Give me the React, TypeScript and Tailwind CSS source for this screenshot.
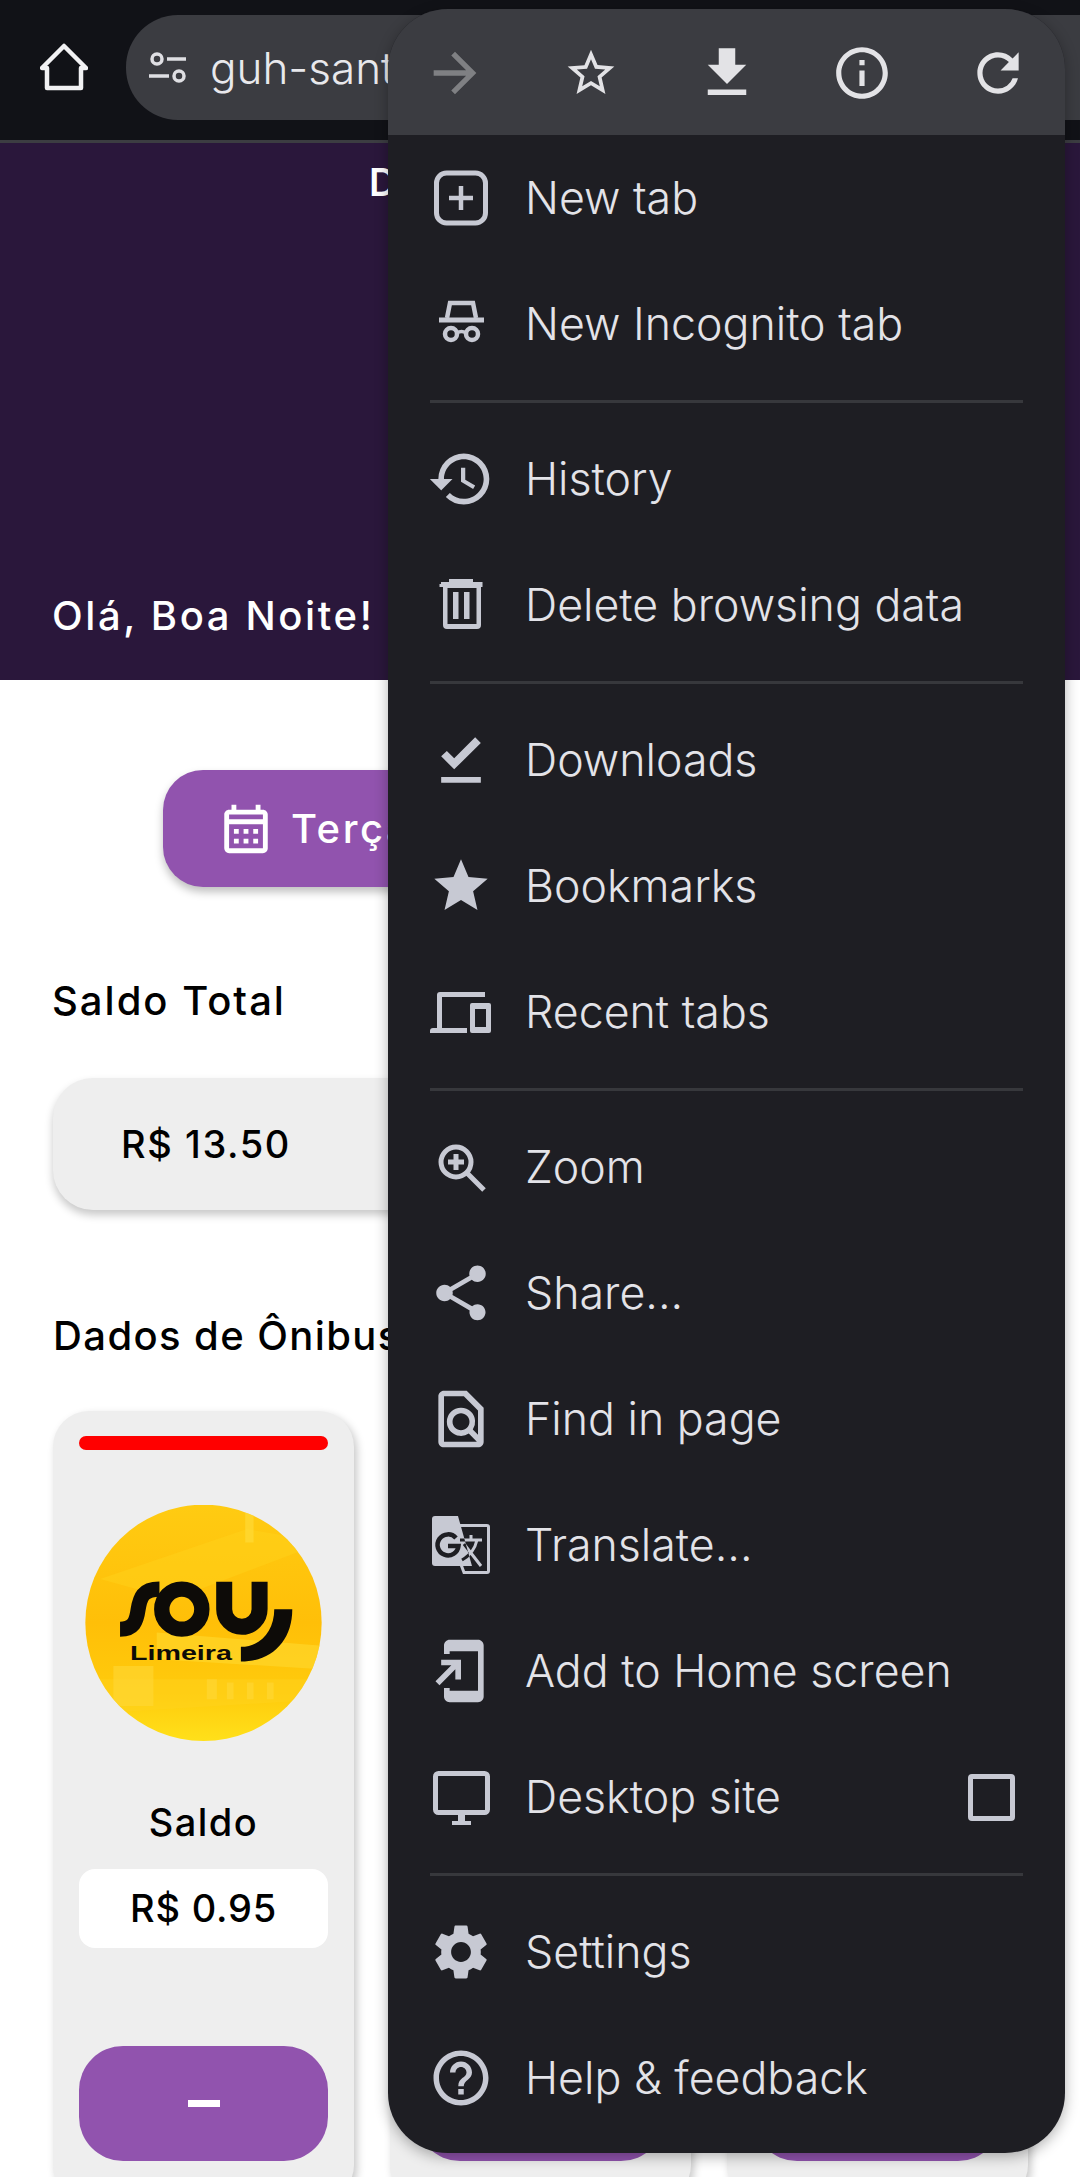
import React from 'react';
import {
  MdArrowForward,
  MdFileDownload,
  MdFileDownloadDone,
  MdHelpOutline,
  MdHistory,
  MdInfoOutline,
  MdOutlineAddToHomeScreen,
  MdOutlineCalendarMonth,
  MdOutlineFindInPage,
  MdRefresh,
  MdSettings,
  MdShare,
  MdStar,
  MdStarBorder,
} from 'react-icons/md';

const pageFont = { fontFamily: 'Inter, sans-serif' };

const NewTabIcon = () => (
  <svg width="68" height="68" viewBox="0 0 68 68" fill="none" stroke="#c7c9d3">
    <rect x="9.5" y="9" width="49" height="50" rx="10" strokeWidth="5" />
    <path d="M34 22v24M22 34h24" strokeWidth="4.5" />
  </svg>
);

const IncognitoIcon = () => (
  <svg width="68" height="68" viewBox="0 0 68 68" fill="none" stroke="#c7c9d3" strokeWidth="4.5">
    <path d="M20 28 23 13h23l3 15" />
    <path d="M12 30h45" strokeWidth="5" />
    <circle cx="24" cy="44" r="6" />
    <circle cx="45" cy="44" r="6" />
    <path d="M30 43c3-2 6-2 9 0" strokeWidth="3.5" />
  </svg>
);

const TrashIcon = () => (
  <svg width="68" height="68" viewBox="0 0 68 68" fill="#c7c9d3">
    <path d="M22 8h24v3h9.500v5h-43v-3H14v-2h8Z" />
    <path d="M16 15h38v39q0 4-4 4H20q-4 0-4-4Zm4.500 2v36h29V17Z" fillRule="evenodd" />
    <path d="M26 21h5.500v27H26ZM37 21h5.500v27H37Z" />
  </svg>
);

const ZoomIcon = () => (
  <svg width="68" height="68" viewBox="0 0 68 68" fill="none" stroke="#c7c9d3" strokeWidth="5">
    <circle cx="29" cy="29" r="15" />
    <path d="M40 40 57 57M29 21v16M21 29h16" />
  </svg>
);

const RecentTabsIcon = () => (
  <svg width="68" height="68" viewBox="0 0 68 68" fill="#c7c9d3">
    <path d="M6 50h4V17q0-3 3-3h45v5H15v31h25v5H3v-2q0-3 3-3Z" />
    <path fillRule="evenodd" d="M45 25h17q2 0 2 2v26q0 2-2 2H45q-2 0-2-2V27q0-2 2-2Zm3 6v18h11V31Z" />
  </svg>
);

const wenStrokes = 'M33 29h22M44 24v5M50 29c-2 9-8 16-15 20M37 33l17 22';

const TranslateIcon = () => (
  <svg width="68" height="68" viewBox="0 0 68 68" fill="none">
    <defs>
      <clipPath id="translateFront">
        <path d="M8 5h23l14 50H8q-3 0-3-3V8q0-3 3-3Z" />
      </clipPath>
    </defs>
    <path d="M33 14.500h27q1.500 0 1.500 1.500v44q0 1.500-1.500 1.500H37l-3-8" stroke="#c7c9d3" strokeWidth="3" />
    <path d={wenStrokes} stroke="#c7c9d3" strokeWidth="3" />
    <path d="M8 5h23l14 50H8q-3 0-3-3V8q0-3 3-3Z" fill="#c7c9d3" />
    <path d="M29 27a10.500 10.500 0 1 0 2.500 8H21" stroke="#1e1e23" strokeWidth="4.500" />
    <g clipPath="url(#translateFront)">
      <path d={wenStrokes} stroke="#1e1e23" strokeWidth="3" />
    </g>
  </svg>
);

const DesktopIcon = () => (
  <svg width="68" height="68" viewBox="0 0 68 68" fill="#c7c9d3">
    <rect x="8.500" y="10.500" width="52" height="39" rx="3" fill="none" stroke="#c7c9d3" strokeWidth="5" />
    <path d="M31 50h7v8h6v4H25v-4h6Z" />
  </svg>
);

const HomeIcon = () => (
  <svg width="48" height="48" viewBox="0 0 48 48" fill="none" stroke="#f1f1f3" strokeWidth="4.500" strokeLinejoin="round">
    <path d="M24 3 2 25h5v20h34V25h5Z" />
  </svg>
);

const TuneIcon = () => (
  <svg width="40" height="32" viewBox="0 0 40 32" fill="none" stroke="#dfdfe3" strokeWidth="3.500">
    <circle cx="9" cy="7" r="5" />
    <path d="M19 7h19M1 24h20" />
    <circle cx="31" cy="24" r="5" />
  </svg>
);

const SouLogo = () => (
  <svg width="237" height="236" viewBox="255 378 710 707">
    <defs>
      <linearGradient id="sou" x1="0" y1="0" x2="0" y2="1">
        <stop offset="0" stopColor="#ffcb12" />
        <stop offset="0.5" stopColor="#ffbf08" />
        <stop offset="0.8" stopColor="#ffcb0c" />
        <stop offset="1" stopColor="#ffe01a" />
      </linearGradient>
      <clipPath id="souClip">
        <circle cx="610" cy="731" r="354" />
      </clipPath>
    </defs>
    <circle cx="610" cy="731" r="354" fill="url(#sou)" />
    <g clipPath="url(#souClip)">
      <path d="M300 600 740 450l230 40-450 170Z" fill="#ffd21a" opacity="0.5" />
      <path d="M470 760 970 800v70l-500-30Z" fill="#ffd52a" opacity="0.7" />
      <path d="M300 900h680v60l-660 40Z" fill="#ffd21e" opacity="0.45" />
      <path d="M735 400h25v90h-25Z" fill="#ffdc3c" opacity="0.6" />
      <path d="M340 860h120v120H340ZM620 900h30v60h-30ZM680 910h20v50h-20ZM740 910h20v50h-20ZM800 910h20v50h-20Z" fill="#ffd93a" opacity="0.55" />
    </g>
    <g fill="none" stroke="#0d0b08">
      <path d="M478 630c-50 0-58 25-64 62-5 36-14 58-54 58" strokeWidth="45" />
      <circle cx="545" cy="690" r="60" strokeWidth="46" />
      <path d="M672 608v82a53 53 0 0 0 106 0v-82" strokeWidth="48" />
    </g>
    <path d="M822 690h54c0 95-62 157-154 157v-44c60 0 100-50 100-113Z" fill="#0d0b08" />
    <text x="390" y="843" fontFamily="'Liberation Sans', sans-serif" fontWeight="700" fontSize="58" textLength="305" lengthAdjust="spacingAndGlyphs" fill="#0d0b08">
      Limeira
    </text>
  </svg>
);

const menuSections = [
  [
    { label: 'New tab', icon: <NewTabIcon /> },
    { label: 'New Incognito tab', icon: <IncognitoIcon /> },
  ],
  [
    { label: 'History', icon: <MdHistory size={68} /> },
    { label: 'Delete browsing data', icon: <TrashIcon /> },
  ],
  [
    { label: 'Downloads', icon: <MdFileDownloadDone size={68} /> },
    { label: 'Bookmarks', icon: <MdStar size={64} /> },
    { label: 'Recent tabs', icon: <RecentTabsIcon /> },
  ],
  [
    { label: 'Zoom', icon: <ZoomIcon /> },
    { label: 'Share...', icon: <MdShare size={66} /> },
    { label: 'Find in page', icon: <MdOutlineFindInPage size={68} /> },
    { label: 'Translate...', icon: <TranslateIcon /> },
    { label: 'Add to Home screen', icon: <MdOutlineAddToHomeScreen size={68} /> },
    { label: 'Desktop site', icon: <DesktopIcon />, checkbox: true },
  ],
  [
    { label: 'Settings', icon: <MdSettings size={66} /> },
    { label: 'Help & feedback', icon: <MdHelpOutline size={66} /> },
  ],
];

const BusCard = ({ first }: { first?: boolean }) => (
  <div className="flex h-[790px] w-[301px] shrink-0 flex-col rounded-[36px] bg-[#eeeeee] px-[26px] pt-[25px] shadow-[3px_4px_8px_rgba(0,0,0,0.22)]">
    <div className="h-[14px] rounded-full bg-[#ff0000]" />
    <div className="mt-[55px] flex h-[236px] justify-center">{first && <SouLogo />}</div>
    <p className="mt-[58px] text-center text-[38px] leading-[46px] font-medium tracking-[1.5px] text-black">Saldo</p>
    <div className="mt-[24px] flex h-[79px] items-center justify-center rounded-[16px] bg-white text-[38px] font-medium tracking-[0.8px] text-black">
      R$ 0.95
    </div>
    <div className="mt-[98px] flex h-[115px] items-center justify-center rounded-[44px] bg-[#9153ae]">
      <div className="h-[7px] w-[32px] bg-white" />
    </div>
  </div>
);

const ChromeMenu = () => (
  <div className="absolute left-[388px] top-[9px] w-[677px] overflow-hidden rounded-[60px] bg-[#1e1e23] pb-[12px] shadow-[0_4px_14px_rgba(0,0,0,0.3)]">
    <div className="flex h-[126px] items-start bg-[#3b3c41] px-[31px] pt-[31px] text-[#e3e3e6]">
      <div className="flex w-full items-center justify-between">
        <div className="flex w-[72px] justify-center"><MdArrowForward size={64} color="#7f8083" /></div>
        <div className="flex w-[72px] justify-center"><MdStarBorder size={56} /></div>
        <div className="flex w-[72px] justify-center"><MdFileDownload size={66} /></div>
        <div className="flex w-[72px] justify-center"><MdInfoOutline size={62} /></div>
        <div className="flex w-[72px] justify-center"><MdRefresh size={62} /></div>
      </div>
    </div>
    {menuSections.map((rows, i) => (
      <div key={i}>
        {i > 0 && <div className="mx-[42px] my-[13px] h-[3px] bg-[#37383c]" />}
        {rows.map((row) => (
          <div key={row.label} className="flex h-[126px] items-center pl-[39px] pr-[50px] text-[#c7c9d3]">
            <div className="flex w-[68px] justify-center">{row.icon}</div>
            <span className="ml-[30px] flex-1 pt-[2px] text-[44.7px] font-light text-[#e3e3e8]">{row.label}</span>
            {row.checkbox && <div className="h-[47px] w-[47px] rounded-[4px] border-[5px] border-[#c7c9d3]" />}
          </div>
        ))}
      </div>
    ))}
  </div>
);

export default function App() {
  return (
    <div className="relative h-[2177px] w-[1080px] overflow-hidden bg-white" style={pageFont}>
      <header className="flex h-[143px] items-start border-b-[3px] border-[#3c3d42] bg-[#111217] pl-[40px] pt-[15px]">
        <div className="mt-[28px]"><HomeIcon /></div>
        <div className="ml-[38px] flex h-[105px] flex-1 items-center rounded-l-[52px] bg-[#3b3c41] pl-[22px]">
          <TuneIcon />
          <span className="ml-[22px] text-[44px] font-light text-[#e8e8ec]">guh-sant</span>
        </div>
      </header>

      <section className="flex h-[537px] flex-col justify-between bg-[#2a173b] pb-[41px] pl-[52px] pt-[16px] text-white">
        <p className="pl-[317px] text-[38px] leading-[46px] font-semibold">D</p>
        <p className="text-[40px] leading-[46px] font-medium tracking-[2.6px]">Olá, Boa Noite!</p>
      </section>

      <main className="px-[53px]">
        <div className="mt-[90px] ml-[110px] flex h-[117px] w-[700px] items-center rounded-[40px] bg-[#9153ae] pl-[54px] text-white shadow-[0_5px_8px_rgba(0,0,0,0.25)]">
          <MdOutlineCalendarMonth size={58} />
          <span className="ml-[16px] text-[40px] font-medium tracking-[2.6px]">Terça</span>
        </div>

        <h2 className="mt-[91px] -ml-[1px] text-[40px] leading-[46px] font-medium tracking-[2px] text-black">Saldo Total</h2>
        <div className="mt-[54px] flex h-[132px] items-center rounded-[40px] bg-[#eeeeee] pl-[68px] text-[38px] font-medium tracking-[1.6px] text-black shadow-[0_5px_8px_rgba(0,0,0,0.22)]">
          R$ 13.50
        </div>

        <h2 className="mt-[103px] text-[40px] leading-[46px] font-medium tracking-[1.4px] whitespace-nowrap text-black">Dados de Ônibus</h2>
        <div className="mt-[52px] flex gap-[36px]">
          <BusCard first />
          <BusCard />
          <BusCard />
        </div>
      </main>

      <ChromeMenu />
    </div>
  );
}
